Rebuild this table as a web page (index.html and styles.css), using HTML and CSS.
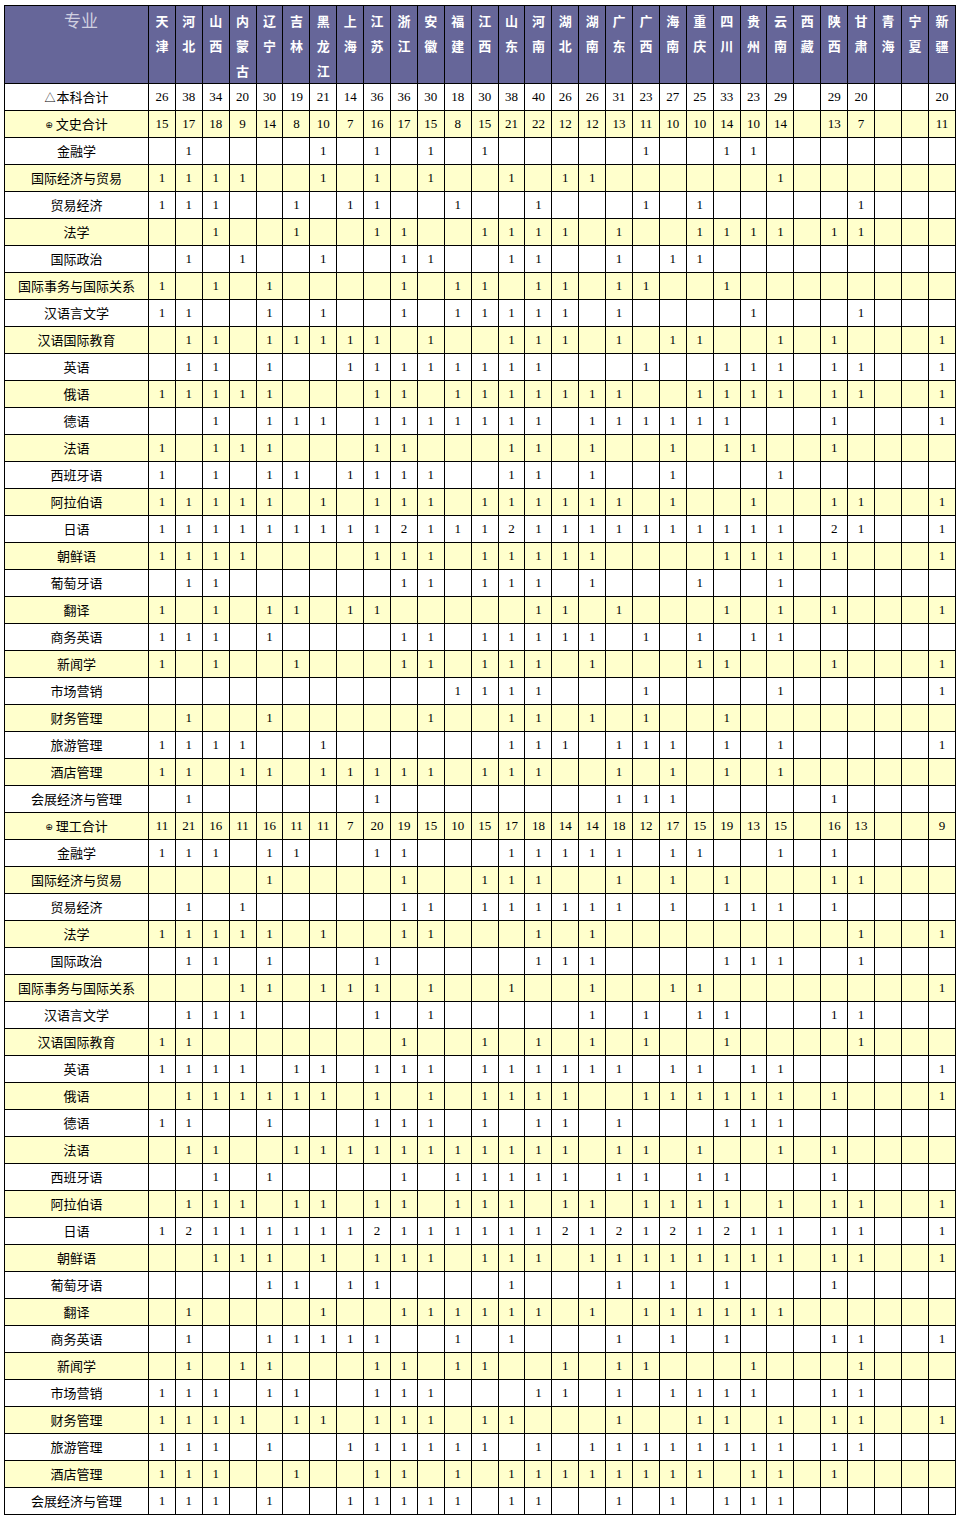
FILE: index.html
```html
<!DOCTYPE html>
<html lang="zh-CN">
<head>
<meta charset="utf-8">
<title>专业招生计划</title>
<link rel="stylesheet" href="styles.css">
</head>
<body>
<div class="page">
<table class="plan">
<colgroup><col class="major-col"></colgroup>
<thead>
<tr><th class="head-major">专业</th><th>天津</th><th>河北</th><th>山西</th><th>内蒙古</th><th>辽宁</th><th>吉林</th><th>黑龙江</th><th>上海</th><th>江苏</th><th>浙江</th><th>安徽</th><th>福建</th><th>江西</th><th>山东</th><th>河南</th><th>湖北</th><th>湖南</th><th>广东</th><th>广西</th><th>海南</th><th>重庆</th><th>四川</th><th>贵州</th><th>云南</th><th>西藏</th><th>陕西</th><th>甘肃</th><th>青海</th><th>宁夏</th><th>新疆</th></tr>
</thead>
<tbody>
<tr><th><span class="tri">△</span>本科合计</th><td>26</td><td>38</td><td>34</td><td>20</td><td>30</td><td>19</td><td>21</td><td>14</td><td>36</td><td>36</td><td>30</td><td>18</td><td>30</td><td>38</td><td>40</td><td>26</td><td>26</td><td>31</td><td>23</td><td>27</td><td>25</td><td>33</td><td>23</td><td>29</td><td></td><td>29</td><td>20</td><td></td><td></td><td>20</td></tr>
<tr><th><span class="plus">⊕</span>文史合计</th><td>15</td><td>17</td><td>18</td><td>9</td><td>14</td><td>8</td><td>10</td><td>7</td><td>16</td><td>17</td><td>15</td><td>8</td><td>15</td><td>21</td><td>22</td><td>12</td><td>12</td><td>13</td><td>11</td><td>10</td><td>10</td><td>14</td><td>10</td><td>14</td><td></td><td>13</td><td>7</td><td></td><td></td><td>11</td></tr>
<tr><th>金融学</th><td></td><td>1</td><td></td><td></td><td></td><td></td><td>1</td><td></td><td>1</td><td></td><td>1</td><td></td><td>1</td><td></td><td></td><td></td><td></td><td></td><td>1</td><td></td><td></td><td>1</td><td>1</td><td></td><td></td><td></td><td></td><td></td><td></td><td></td></tr>
<tr><th>国际经济与贸易</th><td>1</td><td>1</td><td>1</td><td>1</td><td></td><td></td><td>1</td><td></td><td>1</td><td></td><td>1</td><td></td><td></td><td>1</td><td></td><td>1</td><td>1</td><td></td><td></td><td></td><td></td><td></td><td></td><td>1</td><td></td><td></td><td></td><td></td><td></td><td></td></tr>
<tr><th>贸易经济</th><td>1</td><td>1</td><td>1</td><td></td><td></td><td>1</td><td></td><td>1</td><td>1</td><td></td><td></td><td>1</td><td></td><td></td><td>1</td><td></td><td></td><td></td><td>1</td><td></td><td>1</td><td></td><td></td><td></td><td></td><td></td><td>1</td><td></td><td></td><td></td></tr>
<tr><th>法学</th><td></td><td></td><td>1</td><td></td><td></td><td>1</td><td></td><td></td><td>1</td><td>1</td><td></td><td></td><td>1</td><td>1</td><td>1</td><td>1</td><td></td><td>1</td><td></td><td></td><td>1</td><td>1</td><td>1</td><td>1</td><td></td><td>1</td><td>1</td><td></td><td></td><td></td></tr>
<tr><th>国际政治</th><td></td><td>1</td><td></td><td>1</td><td></td><td></td><td>1</td><td></td><td></td><td>1</td><td>1</td><td></td><td></td><td>1</td><td>1</td><td></td><td></td><td>1</td><td></td><td>1</td><td>1</td><td></td><td></td><td></td><td></td><td></td><td></td><td></td><td></td><td></td></tr>
<tr><th>国际事务与国际关系</th><td>1</td><td></td><td>1</td><td></td><td>1</td><td></td><td></td><td></td><td></td><td>1</td><td></td><td>1</td><td>1</td><td></td><td>1</td><td>1</td><td></td><td>1</td><td>1</td><td></td><td></td><td>1</td><td></td><td></td><td></td><td></td><td></td><td></td><td></td><td></td></tr>
<tr><th>汉语言文学</th><td>1</td><td>1</td><td></td><td></td><td>1</td><td></td><td>1</td><td></td><td></td><td>1</td><td></td><td>1</td><td>1</td><td>1</td><td>1</td><td>1</td><td></td><td>1</td><td></td><td></td><td></td><td></td><td>1</td><td></td><td></td><td></td><td>1</td><td></td><td></td><td></td></tr>
<tr><th>汉语国际教育</th><td></td><td>1</td><td>1</td><td></td><td>1</td><td>1</td><td>1</td><td>1</td><td>1</td><td></td><td>1</td><td></td><td></td><td>1</td><td>1</td><td>1</td><td></td><td>1</td><td></td><td>1</td><td>1</td><td></td><td></td><td>1</td><td></td><td>1</td><td></td><td></td><td></td><td>1</td></tr>
<tr><th>英语</th><td></td><td>1</td><td>1</td><td></td><td>1</td><td></td><td></td><td>1</td><td>1</td><td>1</td><td>1</td><td>1</td><td>1</td><td>1</td><td>1</td><td></td><td></td><td></td><td>1</td><td></td><td></td><td>1</td><td>1</td><td>1</td><td></td><td>1</td><td>1</td><td></td><td></td><td>1</td></tr>
<tr><th>俄语</th><td>1</td><td>1</td><td>1</td><td>1</td><td>1</td><td></td><td></td><td></td><td>1</td><td>1</td><td></td><td>1</td><td>1</td><td>1</td><td>1</td><td>1</td><td>1</td><td>1</td><td></td><td></td><td>1</td><td>1</td><td>1</td><td>1</td><td></td><td>1</td><td>1</td><td></td><td></td><td>1</td></tr>
<tr><th>德语</th><td></td><td></td><td>1</td><td></td><td>1</td><td>1</td><td>1</td><td></td><td>1</td><td>1</td><td>1</td><td>1</td><td>1</td><td>1</td><td>1</td><td></td><td>1</td><td>1</td><td>1</td><td>1</td><td>1</td><td>1</td><td></td><td></td><td></td><td>1</td><td></td><td></td><td></td><td>1</td></tr>
<tr><th>法语</th><td>1</td><td></td><td>1</td><td>1</td><td>1</td><td></td><td></td><td></td><td>1</td><td>1</td><td></td><td></td><td></td><td>1</td><td>1</td><td></td><td>1</td><td></td><td></td><td>1</td><td></td><td>1</td><td>1</td><td></td><td></td><td>1</td><td></td><td></td><td></td><td></td></tr>
<tr><th>西班牙语</th><td>1</td><td></td><td>1</td><td></td><td>1</td><td>1</td><td></td><td>1</td><td>1</td><td>1</td><td>1</td><td></td><td></td><td>1</td><td>1</td><td></td><td>1</td><td></td><td></td><td>1</td><td></td><td></td><td></td><td>1</td><td></td><td></td><td></td><td></td><td></td><td></td></tr>
<tr><th>阿拉伯语</th><td>1</td><td>1</td><td>1</td><td>1</td><td>1</td><td></td><td>1</td><td></td><td>1</td><td>1</td><td>1</td><td></td><td>1</td><td>1</td><td>1</td><td>1</td><td>1</td><td>1</td><td></td><td>1</td><td></td><td></td><td>1</td><td></td><td></td><td>1</td><td>1</td><td></td><td></td><td>1</td></tr>
<tr><th>日语</th><td>1</td><td>1</td><td>1</td><td>1</td><td>1</td><td>1</td><td>1</td><td>1</td><td>1</td><td>2</td><td>1</td><td>1</td><td>1</td><td>2</td><td>1</td><td>1</td><td>1</td><td>1</td><td>1</td><td>1</td><td>1</td><td>1</td><td>1</td><td>1</td><td></td><td>2</td><td>1</td><td></td><td></td><td>1</td></tr>
<tr><th>朝鲜语</th><td>1</td><td>1</td><td>1</td><td>1</td><td></td><td></td><td></td><td></td><td>1</td><td>1</td><td>1</td><td></td><td>1</td><td>1</td><td>1</td><td>1</td><td>1</td><td></td><td></td><td></td><td></td><td>1</td><td>1</td><td>1</td><td></td><td>1</td><td></td><td></td><td></td><td>1</td></tr>
<tr><th>葡萄牙语</th><td></td><td>1</td><td>1</td><td></td><td></td><td></td><td></td><td></td><td></td><td>1</td><td>1</td><td></td><td>1</td><td>1</td><td>1</td><td></td><td>1</td><td></td><td></td><td></td><td>1</td><td></td><td></td><td>1</td><td></td><td></td><td></td><td></td><td></td><td></td></tr>
<tr><th>翻译</th><td>1</td><td></td><td>1</td><td></td><td>1</td><td>1</td><td></td><td>1</td><td>1</td><td></td><td></td><td></td><td></td><td></td><td>1</td><td>1</td><td></td><td>1</td><td></td><td></td><td></td><td>1</td><td></td><td>1</td><td></td><td>1</td><td></td><td></td><td></td><td>1</td></tr>
<tr><th>商务英语</th><td>1</td><td>1</td><td>1</td><td></td><td>1</td><td></td><td></td><td></td><td></td><td>1</td><td>1</td><td></td><td>1</td><td>1</td><td>1</td><td>1</td><td>1</td><td></td><td>1</td><td></td><td>1</td><td></td><td>1</td><td>1</td><td></td><td></td><td></td><td></td><td></td><td></td></tr>
<tr><th>新闻学</th><td>1</td><td></td><td>1</td><td></td><td></td><td>1</td><td></td><td></td><td></td><td>1</td><td>1</td><td></td><td>1</td><td>1</td><td>1</td><td></td><td>1</td><td></td><td></td><td></td><td>1</td><td>1</td><td></td><td></td><td></td><td>1</td><td></td><td></td><td></td><td>1</td></tr>
<tr><th>市场营销</th><td></td><td></td><td></td><td></td><td></td><td></td><td></td><td></td><td></td><td></td><td></td><td>1</td><td>1</td><td>1</td><td>1</td><td></td><td></td><td></td><td>1</td><td></td><td></td><td></td><td></td><td>1</td><td></td><td></td><td></td><td></td><td></td><td>1</td></tr>
<tr><th>财务管理</th><td></td><td>1</td><td></td><td></td><td>1</td><td></td><td></td><td></td><td></td><td></td><td>1</td><td></td><td></td><td>1</td><td>1</td><td></td><td>1</td><td></td><td>1</td><td></td><td></td><td>1</td><td></td><td></td><td></td><td></td><td></td><td></td><td></td><td></td></tr>
<tr><th>旅游管理</th><td>1</td><td>1</td><td>1</td><td>1</td><td></td><td></td><td>1</td><td></td><td></td><td></td><td></td><td></td><td></td><td>1</td><td>1</td><td>1</td><td></td><td>1</td><td>1</td><td>1</td><td></td><td>1</td><td></td><td>1</td><td></td><td></td><td></td><td></td><td></td><td>1</td></tr>
<tr><th>酒店管理</th><td>1</td><td>1</td><td></td><td>1</td><td>1</td><td></td><td>1</td><td>1</td><td>1</td><td>1</td><td>1</td><td></td><td>1</td><td>1</td><td>1</td><td></td><td></td><td>1</td><td></td><td>1</td><td></td><td>1</td><td></td><td>1</td><td></td><td></td><td></td><td></td><td></td><td></td></tr>
<tr><th>会展经济与管理</th><td></td><td>1</td><td></td><td></td><td></td><td></td><td></td><td></td><td>1</td><td></td><td></td><td></td><td></td><td></td><td></td><td></td><td></td><td>1</td><td>1</td><td>1</td><td></td><td></td><td></td><td></td><td></td><td>1</td><td></td><td></td><td></td><td></td></tr>
<tr><th><span class="plus">⊕</span>理工合计</th><td>11</td><td>21</td><td>16</td><td>11</td><td>16</td><td>11</td><td>11</td><td>7</td><td>20</td><td>19</td><td>15</td><td>10</td><td>15</td><td>17</td><td>18</td><td>14</td><td>14</td><td>18</td><td>12</td><td>17</td><td>15</td><td>19</td><td>13</td><td>15</td><td></td><td>16</td><td>13</td><td></td><td></td><td>9</td></tr>
<tr><th>金融学</th><td>1</td><td>1</td><td>1</td><td></td><td>1</td><td>1</td><td></td><td></td><td>1</td><td>1</td><td></td><td></td><td></td><td>1</td><td>1</td><td>1</td><td>1</td><td>1</td><td></td><td>1</td><td>1</td><td></td><td></td><td>1</td><td></td><td>1</td><td></td><td></td><td></td><td></td></tr>
<tr><th>国际经济与贸易</th><td></td><td></td><td></td><td></td><td>1</td><td></td><td></td><td></td><td></td><td>1</td><td></td><td></td><td>1</td><td>1</td><td>1</td><td></td><td></td><td>1</td><td></td><td>1</td><td></td><td>1</td><td></td><td></td><td></td><td>1</td><td>1</td><td></td><td></td><td></td></tr>
<tr><th>贸易经济</th><td></td><td>1</td><td></td><td>1</td><td></td><td></td><td></td><td></td><td></td><td>1</td><td>1</td><td></td><td>1</td><td>1</td><td>1</td><td>1</td><td>1</td><td>1</td><td></td><td>1</td><td></td><td>1</td><td>1</td><td>1</td><td></td><td>1</td><td></td><td></td><td></td><td></td></tr>
<tr><th>法学</th><td>1</td><td>1</td><td>1</td><td>1</td><td>1</td><td></td><td>1</td><td></td><td></td><td>1</td><td>1</td><td></td><td></td><td></td><td>1</td><td></td><td>1</td><td></td><td></td><td></td><td></td><td></td><td></td><td></td><td></td><td></td><td>1</td><td></td><td></td><td>1</td></tr>
<tr><th>国际政治</th><td></td><td>1</td><td>1</td><td></td><td>1</td><td></td><td></td><td></td><td>1</td><td></td><td></td><td></td><td></td><td></td><td>1</td><td>1</td><td>1</td><td></td><td></td><td></td><td></td><td>1</td><td>1</td><td>1</td><td></td><td></td><td>1</td><td></td><td></td><td></td></tr>
<tr><th>国际事务与国际关系</th><td></td><td></td><td></td><td>1</td><td>1</td><td></td><td>1</td><td>1</td><td>1</td><td></td><td>1</td><td></td><td></td><td>1</td><td></td><td></td><td>1</td><td></td><td></td><td>1</td><td>1</td><td></td><td></td><td></td><td></td><td></td><td></td><td></td><td></td><td>1</td></tr>
<tr><th>汉语言文学</th><td></td><td>1</td><td>1</td><td>1</td><td></td><td></td><td></td><td></td><td>1</td><td></td><td>1</td><td></td><td></td><td></td><td></td><td></td><td>1</td><td></td><td>1</td><td></td><td>1</td><td>1</td><td></td><td></td><td></td><td>1</td><td>1</td><td></td><td></td><td></td></tr>
<tr><th>汉语国际教育</th><td>1</td><td>1</td><td></td><td></td><td></td><td></td><td></td><td></td><td></td><td>1</td><td></td><td></td><td>1</td><td></td><td>1</td><td></td><td>1</td><td></td><td>1</td><td></td><td></td><td>1</td><td></td><td></td><td></td><td></td><td>1</td><td></td><td></td><td></td></tr>
<tr><th>英语</th><td>1</td><td>1</td><td>1</td><td>1</td><td></td><td>1</td><td>1</td><td></td><td>1</td><td>1</td><td>1</td><td></td><td>1</td><td>1</td><td>1</td><td>1</td><td>1</td><td>1</td><td></td><td>1</td><td>1</td><td></td><td>1</td><td>1</td><td></td><td></td><td></td><td></td><td></td><td>1</td></tr>
<tr><th>俄语</th><td></td><td>1</td><td>1</td><td>1</td><td>1</td><td>1</td><td>1</td><td></td><td>1</td><td></td><td>1</td><td></td><td>1</td><td>1</td><td>1</td><td>1</td><td></td><td></td><td>1</td><td>1</td><td>1</td><td>1</td><td>1</td><td>1</td><td></td><td>1</td><td></td><td></td><td></td><td>1</td></tr>
<tr><th>德语</th><td>1</td><td>1</td><td></td><td></td><td>1</td><td></td><td></td><td></td><td>1</td><td>1</td><td>1</td><td></td><td>1</td><td></td><td>1</td><td>1</td><td></td><td>1</td><td></td><td></td><td></td><td>1</td><td>1</td><td>1</td><td></td><td></td><td></td><td></td><td></td><td></td></tr>
<tr><th>法语</th><td></td><td>1</td><td>1</td><td></td><td></td><td>1</td><td>1</td><td>1</td><td>1</td><td>1</td><td>1</td><td>1</td><td>1</td><td>1</td><td>1</td><td>1</td><td></td><td>1</td><td>1</td><td></td><td>1</td><td></td><td></td><td>1</td><td></td><td>1</td><td></td><td></td><td></td><td></td></tr>
<tr><th>西班牙语</th><td></td><td></td><td>1</td><td></td><td>1</td><td></td><td></td><td></td><td></td><td>1</td><td></td><td>1</td><td>1</td><td>1</td><td>1</td><td>1</td><td></td><td>1</td><td>1</td><td></td><td>1</td><td>1</td><td></td><td></td><td></td><td>1</td><td></td><td></td><td></td><td></td></tr>
<tr><th>阿拉伯语</th><td></td><td>1</td><td>1</td><td>1</td><td></td><td>1</td><td>1</td><td></td><td>1</td><td>1</td><td></td><td>1</td><td>1</td><td>1</td><td></td><td>1</td><td>1</td><td></td><td>1</td><td>1</td><td>1</td><td>1</td><td></td><td>1</td><td></td><td>1</td><td>1</td><td></td><td></td><td>1</td></tr>
<tr><th>日语</th><td>1</td><td>2</td><td>1</td><td>1</td><td>1</td><td>1</td><td>1</td><td>1</td><td>2</td><td>1</td><td>1</td><td>1</td><td>1</td><td>1</td><td>1</td><td>2</td><td>1</td><td>2</td><td>1</td><td>2</td><td>1</td><td>2</td><td>1</td><td>1</td><td></td><td>1</td><td>1</td><td></td><td></td><td>1</td></tr>
<tr><th>朝鲜语</th><td></td><td></td><td>1</td><td>1</td><td>1</td><td></td><td>1</td><td></td><td>1</td><td>1</td><td>1</td><td></td><td>1</td><td>1</td><td>1</td><td></td><td>1</td><td>1</td><td>1</td><td>1</td><td>1</td><td>1</td><td>1</td><td>1</td><td></td><td>1</td><td>1</td><td></td><td></td><td>1</td></tr>
<tr><th>葡萄牙语</th><td></td><td></td><td></td><td></td><td>1</td><td>1</td><td></td><td>1</td><td>1</td><td></td><td></td><td></td><td></td><td>1</td><td></td><td></td><td></td><td>1</td><td></td><td>1</td><td></td><td>1</td><td></td><td></td><td></td><td>1</td><td></td><td></td><td></td><td></td></tr>
<tr><th>翻译</th><td></td><td>1</td><td></td><td></td><td></td><td></td><td>1</td><td></td><td></td><td>1</td><td>1</td><td>1</td><td>1</td><td>1</td><td>1</td><td></td><td>1</td><td></td><td>1</td><td>1</td><td>1</td><td>1</td><td>1</td><td>1</td><td></td><td></td><td></td><td></td><td></td><td></td></tr>
<tr><th>商务英语</th><td></td><td>1</td><td></td><td></td><td>1</td><td>1</td><td>1</td><td>1</td><td>1</td><td></td><td></td><td>1</td><td></td><td>1</td><td></td><td></td><td></td><td>1</td><td></td><td>1</td><td></td><td>1</td><td></td><td></td><td></td><td>1</td><td>1</td><td></td><td></td><td>1</td></tr>
<tr><th>新闻学</th><td></td><td>1</td><td></td><td>1</td><td>1</td><td></td><td></td><td></td><td>1</td><td>1</td><td></td><td>1</td><td>1</td><td></td><td></td><td>1</td><td></td><td>1</td><td>1</td><td></td><td></td><td></td><td>1</td><td></td><td></td><td></td><td>1</td><td></td><td></td><td></td></tr>
<tr><th>市场营销</th><td>1</td><td>1</td><td>1</td><td></td><td>1</td><td>1</td><td></td><td></td><td>1</td><td>1</td><td>1</td><td></td><td></td><td></td><td>1</td><td>1</td><td></td><td>1</td><td></td><td>1</td><td>1</td><td>1</td><td>1</td><td></td><td></td><td>1</td><td>1</td><td></td><td></td><td></td></tr>
<tr><th>财务管理</th><td>1</td><td>1</td><td>1</td><td>1</td><td></td><td>1</td><td>1</td><td></td><td>1</td><td>1</td><td>1</td><td></td><td>1</td><td>1</td><td></td><td></td><td></td><td>1</td><td></td><td></td><td>1</td><td>1</td><td></td><td>1</td><td></td><td>1</td><td>1</td><td></td><td></td><td>1</td></tr>
<tr><th>旅游管理</th><td>1</td><td>1</td><td>1</td><td></td><td>1</td><td></td><td></td><td>1</td><td>1</td><td>1</td><td>1</td><td>1</td><td>1</td><td></td><td>1</td><td></td><td>1</td><td>1</td><td>1</td><td>1</td><td>1</td><td>1</td><td>1</td><td>1</td><td></td><td>1</td><td>1</td><td></td><td></td><td></td></tr>
<tr><th>酒店管理</th><td>1</td><td>1</td><td>1</td><td></td><td></td><td>1</td><td></td><td></td><td>1</td><td>1</td><td></td><td>1</td><td></td><td>1</td><td>1</td><td>1</td><td>1</td><td>1</td><td>1</td><td>1</td><td>1</td><td></td><td>1</td><td>1</td><td></td><td>1</td><td></td><td></td><td></td><td></td></tr>
<tr><th>会展经济与管理</th><td>1</td><td>1</td><td>1</td><td></td><td>1</td><td></td><td></td><td>1</td><td>1</td><td>1</td><td>1</td><td>1</td><td></td><td>1</td><td>1</td><td></td><td></td><td>1</td><td></td><td>1</td><td></td><td>1</td><td>1</td><td>1</td><td></td><td></td><td></td><td></td><td></td><td></td></tr>
</tbody>
</table>
</div>
</body>
</html>
```

FILE: styles.css
```css
html, body {
  margin: 0;
  padding: 0;
  background: #ffffff;
}

body {
  font-family: "Liberation Serif", "Noto Sans CJK SC", serif;
  color: #000000;
}

.page {
  padding: 5px 0 0 4px;
}

.plan {
  border-collapse: collapse;
  table-layout: fixed;
  width: 952px;
}

.plan .major-col {
  width: 144px;
}

.plan th,
.plan td {
  border: 1px solid #000000;
  padding: 0;
  text-align: center;
  font-weight: normal;
}

.plan thead tr {
  height: 78px;
}

.plan thead th {
  background: #666699;
  color: #ffffff;
  font-family: "Noto Sans CJK SC", sans-serif;
  font-weight: bold;
  font-size: 13px;
  line-height: 25px;
  vertical-align: top;
  padding: 2px 4px 0;
}

.plan thead th.head-major {
  font-weight: normal;
  font-size: 17px;
  line-height: 28px;
  color: #d0d0e0;
  padding: 0 0 0 9px;
}

.plan tbody tr {
  height: 27px;
}

.plan tbody tr:nth-child(even) {
  background: #ffffcc;
}

.plan tbody td {
  font-size: 13px;
  line-height: 16px;
}

.plan tbody th {
  font-family: "Noto Sans CJK SC", sans-serif;
  font-size: 13px;
  line-height: 16px;
  white-space: nowrap;
}

.tri {
  font-size: 11px;
  margin-right: 1px;
}

.plus {
  font-family: "DejaVu Sans", sans-serif;
  font-size: 9px;
  margin-right: 3px;
  vertical-align: 1px;
}
```
